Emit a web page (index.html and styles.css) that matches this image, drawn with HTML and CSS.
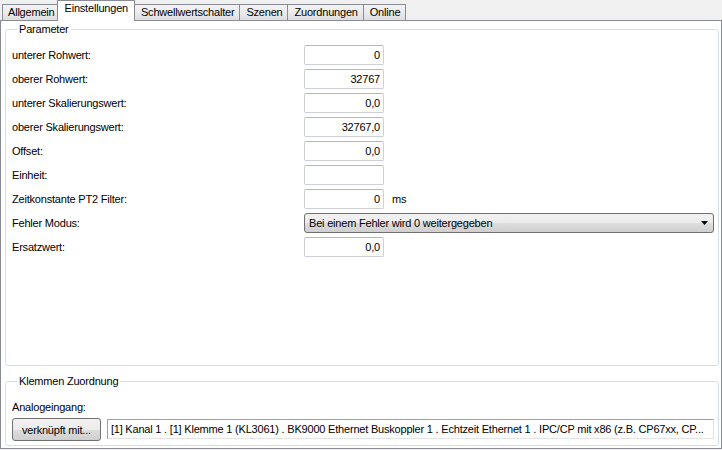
FILE: index.html
```html
<!DOCTYPE html>
<html>
<head>
<meta charset="utf-8">
<link rel="stylesheet" href="styles.css">
</head>
<body>
<div class="window">
  <div class="tabs">
    <div class="tab">Allgemein</div>
    <div class="tab active">Einstellungen</div>
    <div class="tab">Schwellwertschalter</div>
    <div class="tab">Szenen</div>
    <div class="tab">Zuordnungen</div>
    <div class="tab">Online</div>
  </div>
  <div class="panel">
    <fieldset class="group params">
      <legend>Parameter</legend>
      <div class="form">
        <label>unterer Rohwert:</label><div class="field">0</div>
        <label>oberer Rohwert:</label><div class="field">32767</div>
        <label>unterer Skalierungswert:</label><div class="field">0,0</div>
        <label>oberer Skalierungswert:</label><div class="field">32767,0</div>
        <label>Offset:</label><div class="field">0,0</div>
        <label>Einheit:</label><div class="field"></div>
        <label>Zeitkonstante PT2 Filter:</label>
        <div class="field-row"><div class="field">0</div><span class="unit">ms</span></div>
        <label>Fehler Modus:</label>
        <div class="select"><span>Bei einem Fehler wird 0 weitergegeben</span><svg class="arrow" width="7" height="4" viewBox="0 0 7 4"><path d="M0 0H7L3.5 4Z" fill="#000"/></svg></div>
        <label>Ersatzwert:</label><div class="field">0,0</div>
      </div>
    </fieldset>
    <fieldset class="group links">
      <legend>Klemmen Zuordnung</legend>
      <div class="sub">Analogeingang:</div>
      <div class="link-row">
        <button class="btn">verknüpft mit...</button>
        <div class="linkfield">[1] Kanal 1 . [1] Klemme 1 (KL3061) . BK9000 Ethernet Buskoppler 1 . Echtzeit Ethernet 1 . IPC/CP mit x86 (z.B. CP67xx, CP...</div>
      </div>
    </fieldset>
  </div>
</div>
</body>
</html>
```
FILE: styles.css
```css
html, body {
  margin: 0;
  padding: 0;
  background: #f0f0f0;
}
body {
  font-family: "Liberation Sans", Arial, sans-serif;
  font-size: 11px;
  letter-spacing: -0.2px;
  color: #000;
}
.window {
  width: 722px;
  height: 450px;
}
.tabs {
  display: flex;
  align-items: flex-end;
  height: 20px;
  padding-left: 2px;
}
.tab {
  height: 16px;
  box-sizing: border-box;
  border: 1px solid #898c95;
  border-bottom: none;
  margin-right: -1px;
  padding: 0 5px 0 6px;
  line-height: 15px;
  background: linear-gradient(#f3f3f3, #ebebeb 50%, #dedede);
  white-space: nowrap;
}
.tab.active {
  height: 21px;
  margin: 0 -1px -1px -2px;
  padding: 0 6px 0 7px;
  line-height: 14px;
  background: #fff;
  position: relative;
  z-index: 1;
}
.tab:first-child {
  padding: 0 4px 0 5px;
}
.panel {
  box-sizing: border-box;
  height: 429px;
  border: 1px solid #898c95;
  background: #fff;
  padding: 2px 2px 2px 4px;
  display: flex;
  flex-direction: column;
}
.group {
  margin: 0;
  padding: 0 4px 0 6px;
  min-width: 0;
  border: 1px solid #d5dfe5;
  border-radius: 3px;
}
.group legend {
  padding: 0 2px;
  margin-left: 5px;
  line-height: 13px;
}
.params {
  flex: 1;
}
.form {
  display: grid;
  grid-template-columns: 292px 1fr;
  row-gap: 4px;
  padding-top: 9px;
  align-items: center;
}
.form label {
  line-height: 13px;
}
.field {
  box-sizing: border-box;
  width: 80px;
  height: 20px;
  border: 1px solid #cdd0d6;
  border-top-color: #b4b7be;
  border-radius: 2px;
  background: #fff;
  text-align: right;
  padding-right: 3px;
  line-height: 18px;
}
.field-row {
  display: flex;
  align-items: center;
}
.unit {
  margin-left: 8px;
}
.select {
  box-sizing: border-box;
  width: 410px;
  height: 20px;
  border: 1px solid #707070;
  border-radius: 3px;
  background: linear-gradient(#f2f2f2, #ebebeb 50%, #dddddd 51%, #cfcfcf);
  display: flex;
  align-items: center;
  justify-content: space-between;
  padding: 0 5px 0 4px;
}
.links {
  margin-top: 9px;
  padding-bottom: 4px;
}
.sub {
  margin-top: 13px;
  line-height: 13px;
}
.link-row {
  display: flex;
  align-items: flex-start;
  margin-top: 4px;
}
.btn {
  box-sizing: border-box;
  width: 89px;
  height: 23px;
  margin: 0;
  border: 1px solid #707070;
  border-radius: 3px;
  background: linear-gradient(#f2f2f2, #ebebeb 50%, #dddddd 51%, #cfcfcf);
  font-family: "Liberation Sans", Arial, sans-serif;
  font-size: 11px;
  letter-spacing: -0.2px;
  color: #000;
  padding: 0;
}
.linkfield {
  box-sizing: border-box;
  margin-left: 6px;
  margin-top: 1px;
  width: 608px;
  height: 20px;
  border: 1px solid #e3e3e3;
  border-top-color: #a0a0a0;
  border-left-color: #a0a0a0;
  background: #fff;
  padding-left: 3px;
  line-height: 18px;
  white-space: nowrap;
  overflow: hidden;
}
```
